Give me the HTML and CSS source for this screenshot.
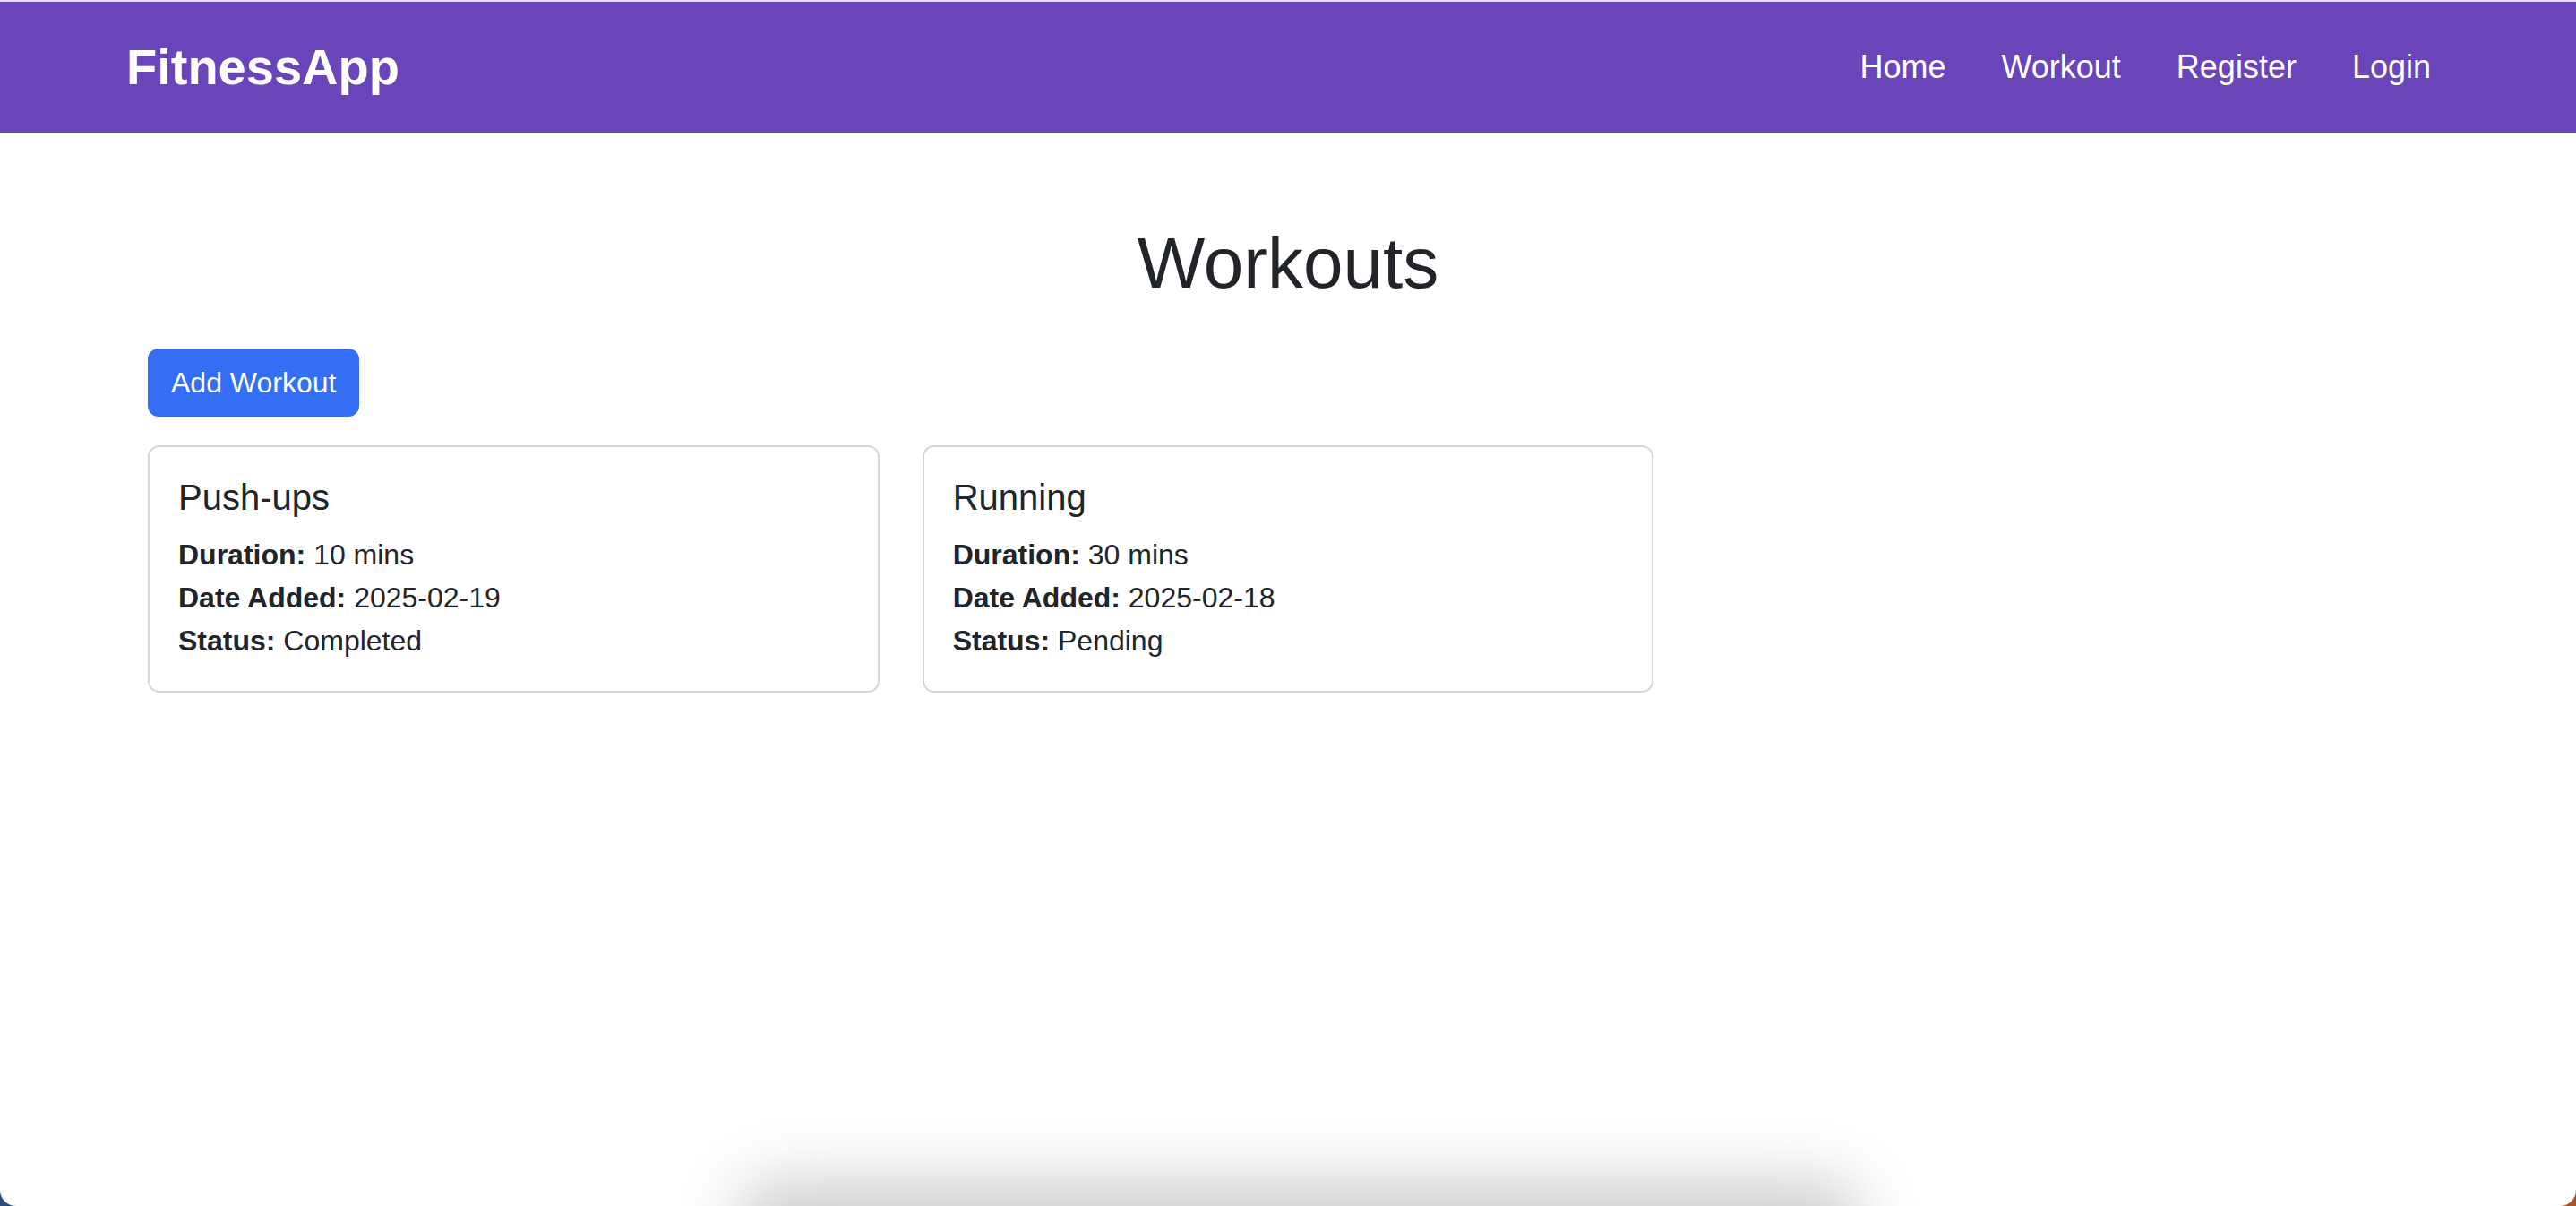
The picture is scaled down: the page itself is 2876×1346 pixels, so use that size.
FILE: index.html
```html
<!DOCTYPE html>
<html lang="en">
<head>
<meta charset="utf-8">
<title>FitnessApp</title>
<link rel="stylesheet" href="styles.css">
</head>
<body>
<div class="window">
  <div class="topline"></div>
  <nav class="navbar">
    <a class="brand" href="#">FitnessApp</a>
    <ul class="nav-links">
      <li><a href="#">Home</a></li>
      <li><a href="#">Workout</a></li>
      <li><a href="#">Register</a></li>
      <li><a href="#">Login</a></li>
    </ul>
  </nav>
  <main class="main">
    <h1 class="title">Workouts</h1>
    <button class="btn-primary" type="button">Add Workout</button>
    <div class="cards">
      <div class="card">
        <h5 class="card-title">Push-ups</h5>
        <p class="card-text"><strong>Duration:</strong> 10 mins<br><strong>Date Added:</strong> 2025-02-19<br><strong>Status:</strong> Completed</p>
      </div>
      <div class="card">
        <h5 class="card-title">Running</h5>
        <p class="card-text"><strong>Duration:</strong> 30 mins<br><strong>Date Added:</strong> 2025-02-18<br><strong>Status:</strong> Pending</p>
      </div>
    </div>
  </main>
  <div class="dock-shadow"></div>
</div>
</body>
</html>
```
FILE: styles.css
```css
html {
  background: linear-gradient(90deg, #2b4e7d 0%, #6a5a60 50%, #a5562a 100%);
}
body {
  margin: 0;
  font-family: "Liberation Sans", Arial, sans-serif;
  color: #212529;
}
.window {
  position: relative;
  height: 1346px;
  background: #ffffff;
  border-radius: 0 0 18px 18px;
  overflow: hidden;
}
.topline {
  height: 2px;
  background: #e9e4ef;
}
.navbar {
  height: 146px;
  background: #6a45b9;
  display: flex;
  align-items: center;
  justify-content: space-between;
  padding: 0 146px 0 141px;
}
.brand {
  color: #ffffff;
  text-decoration: none;
  font-size: 56px;
  font-weight: 700;
  line-height: 1;
}
.nav-links {
  list-style: none;
  margin: 0;
  padding: 0;
  display: flex;
  gap: 30px;
}
.nav-links a {
  display: block;
  padding: 0 16px;
  color: #ffffff;
  text-decoration: none;
  font-size: 36px;
  line-height: 48px;
}
.main {
  padding: 0 165px;
}
.title {
  margin: 98px 0 47px;
  text-align: center;
  font-size: 80px;
  font-weight: 500;
  line-height: 96px;
}
.btn-primary {
  display: block;
  margin: 0 0 32px;
  padding: 12px 24px;
  border: 2px solid #336ef4;
  border-radius: 12px;
  background: #336ef4;
  color: #ffffff;
  font-family: inherit;
  font-size: 32px;
  line-height: 48px;
  height: 76px;
}
.cards {
  display: grid;
  grid-template-columns: repeat(3, 1fr);
  gap: 48px;
  align-items: start;
}
.card {
  border: 2px solid #d6d6d6;
  border-radius: 13px;
  padding: 32px;
}
.card-title {
  margin: 0 0 16px;
  font-size: 40px;
  font-weight: 500;
  line-height: 48px;
}
.card-text {
  margin: 0;
  font-size: 32px;
  line-height: 48px;
}
.card-text strong {
  font-weight: 700;
}
.dock-shadow {
  position: absolute;
  left: 820px;
  width: 1260px;
  bottom: -80px;
  height: 110px;
  border-radius: 50px;
  background: #cfcfcf;
  filter: blur(34px);
}
```
